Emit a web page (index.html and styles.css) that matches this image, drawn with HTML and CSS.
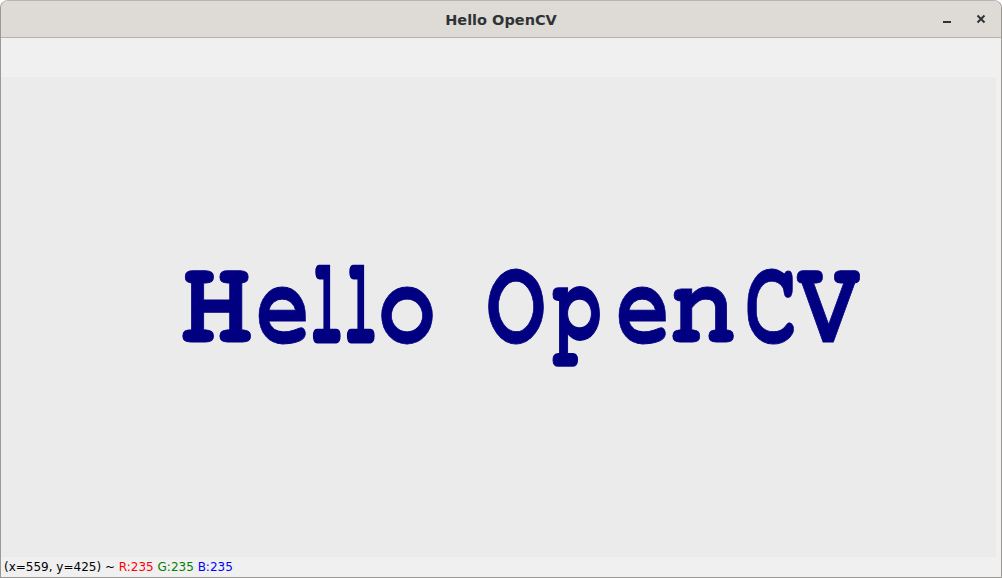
FILE: index.html
```html
<!DOCTYPE html>
<html>
<head>
<meta charset="utf-8">
<link rel="stylesheet" href="styles.css">
</head>
<body>
<div class="window">
  <header class="titlebar">
    <div class="title">Hello OpenCV</div>
    <div class="controls">
      <svg class="btn" width="12" height="12" viewBox="0 0 12 12"><rect x="2" y="8" width="8" height="2" fill="#2e3436"/></svg>
      <svg class="btn" width="12" height="12" viewBox="0 0 12 12"><path d="M2.5 2.5 L9.5 9.5 M9.5 2.5 L2.5 9.5" stroke="#2e3436" stroke-width="2"/></svg>
    </div>
  </header>
  <div class="toolbar"></div>
  <main class="canvas">
    <div class="hello" aria-label="Hello OpenCV">
      <span class="word"><span class="g gH"><span>H</span></span><span class="g ge"><span>e</span></span><span class="g gl"><span>l</span></span><span class="g gl"><span>l</span></span><span class="g go"><span>o</span></span></span><span class="space"> </span><span class="word"><span class="g gO"><span>O</span></span><span class="g gp"><span>p</span></span><span class="g ge"><span>e</span></span><span class="g gn"><span>n</span></span><span class="g gC"><span>C</span></span><span class="g gV"><span>V</span></span></span>
    </div>
  </main>
  <footer class="status">(x=559, y=425) ~ <span class="r">R:235</span> <span class="g2">G:235</span> <span class="b">B:235</span></footer>
</div>
</body>
</html>
```
FILE: styles.css
```css
html, body { margin: 0; padding: 0; }
body { width: 1002px; height: 578px; overflow: hidden; background: #ffffff; }
.window {
  width: 1002px; height: 578px; box-sizing: border-box;
  border: 1px solid #9b9895; border-top-color: #b8b4b0;
  border-radius: 8px 8px 0 0;
  display: flex; flex-direction: column; overflow: hidden;
  background: #f0f0f0;
}
.titlebar {
  height: 36px; flex: none; background: #dedad6;
  border-bottom: 1px solid #b6b2ae;
  display: flex; align-items: center; justify-content: center;
  position: relative;
  font-family: "DejaVu Sans", sans-serif; font-weight: bold; font-size: 14.5px; color: #2e3436;
}
.title { margin-top: 1px; }
.controls {
  position: absolute; right: 14px; top: 12px;
  display: flex; gap: 22px;
}
.btn { display: block; }
.toolbar { height: 39px; flex: none; background: #f0f0f0; }
.canvas {
  flex: 1; background: #ebebeb; margin-right: 5px;
  display: flex; justify-content: flex-start; align-items: flex-start;
}
.hello {
  display: flex; align-items: baseline;
  margin-top: 168px; margin-left: 182px;
  font-family: "FreeMono", "Liberation Mono", monospace; font-weight: bold;
  font-size: 121.5px; color: #000080; line-height: 1;
  white-space: pre;
}
.word { display: flex; align-items: baseline; }
.space { display: inline-block; width: 56px; }
.g { display: inline-block; overflow: visible; }
.g > span { display: inline-block; transform-origin: 0 50%; -webkit-text-stroke: 0.8px #000080; }
.gH { width: 75px; }
.gH > span { transform: translateX(-3px) scaleX(1); }
.ge { width: 55px; }
.ge > span { transform: translateX(-2px) scaleX(0.74); }
.gl { width: 34px; }
.gl > span { transform: translateX(-3px) scaleX(0.46); -webkit-text-stroke: 2.4px #000080; }
.go { width: 51px; }
.go > span { transform: translateX(-3.5px) scaleX(0.81); }
.gO { width: 65px; }
.gO > span { transform: translateX(-1.5px) scaleX(0.81); }
.gp { width: 65px; }
.gp > span { transform: translateX(0px) scaleX(0.66); -webkit-text-stroke: 1.4px #000080; }
.gn { width: 74px; }
.gn > span { transform: translateX(-2.7px) scaleX(0.91); }
.gC { width: 50px; }
.gC > span { transform: translateX(-2px) scaleX(0.71); }
.gV { width: 63px; }
.gV > span { transform: translateX(0px) scaleX(0.86); }
.status {
  height: 20px; flex: none; background: #f0f0f0;
  font-family: "DejaVu Sans", sans-serif; font-size: 12px; color: #000;
  line-height: 20px; padding-left: 3px;
}
.r { color: #ff0000; }
.g2 { color: #008000; }
.b { color: #0000ff; }
```
